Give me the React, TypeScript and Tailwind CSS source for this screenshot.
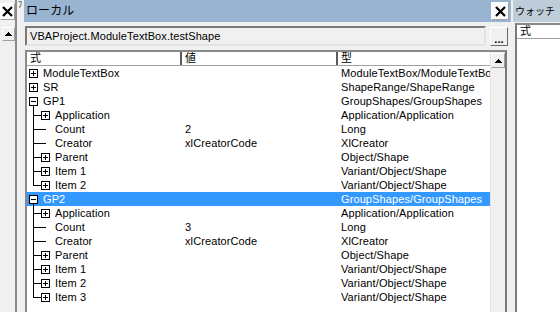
import React from "react";

type Row = {
  depth: 0 | 1;
  box?: "+" | "-";
  name: string;
  value?: string;
  type: string;
  last?: boolean;
  selected?: boolean;
};

const rows: Row[] = [
  { depth: 0, box: "+", name: "ModuleTextBox", type: "ModuleTextBox/ModuleTextBox" },
  { depth: 0, box: "+", name: "SR", type: "ShapeRange/ShapeRange" },
  { depth: 0, box: "-", name: "GP1", type: "GroupShapes/GroupShapes" },
  { depth: 1, box: "+", name: "Application", type: "Application/Application" },
  { depth: 1, name: "Count", value: "2", type: "Long" },
  { depth: 1, name: "Creator", value: "xlCreatorCode", type: "XlCreator" },
  { depth: 1, box: "+", name: "Parent", type: "Object/Shape" },
  { depth: 1, box: "+", name: "Item 1", type: "Variant/Object/Shape" },
  { depth: 1, box: "+", name: "Item 2", type: "Variant/Object/Shape", last: true },
  { depth: 0, box: "-", name: "GP2", type: "GroupShapes/GroupShapes", selected: true },
  { depth: 1, box: "+", name: "Application", type: "Application/Application" },
  { depth: 1, name: "Count", value: "3", type: "Long" },
  { depth: 1, name: "Creator", value: "xlCreatorCode", type: "XlCreator" },
  { depth: 1, box: "+", name: "Parent", type: "Object/Shape" },
  { depth: 1, box: "+", name: "Item 1", type: "Variant/Object/Shape" },
  { depth: 1, box: "+", name: "Item 2", type: "Variant/Object/Shape" },
  { depth: 1, box: "+", name: "Item 3", type: "Variant/Object/Shape", last: true },
];

function ExpandBox({ x, sign }: { x: number; sign: "+" | "-" }) {
  return (
    <g>
      <rect x={x + 0.5} y={3.5} width={8} height={8} fill="#fff" stroke="#000" />
      <line x1={x + 2} y1={7.5} x2={x + 7} y2={7.5} stroke="#000" />
      {sign === "+" && <line x1={x + 4.5} y1={5} x2={x + 4.5} y2={10} stroke="#000" />}
    </g>
  );
}

function TreeGlyph({ row }: { row: Row }) {
  if (row.depth === 0) {
    return (
      <svg width="16" height="14" shapeRendering="crispEdges" className="shrink-0">
        {row.box === "-" && <line x1={6.5} y1={11} x2={6.5} y2={14} stroke="#000" />}
        {row.box && <ExpandBox x={2} sign={row.box} />}
      </svg>
    );
  }
  return (
    <svg width="28" height="14" shapeRendering="crispEdges" className="shrink-0">
      <line x1={6.5} y1={0} x2={6.5} y2={row.last ? 8 : 14} stroke="#000" />
      <line x1={6} y1={7.5} x2={row.box ? 14 : 19} y2={7.5} stroke="#000" />
      {row.box && <ExpandBox x={14} sign={row.box} />}
    </svg>
  );
}

function CloseButton({ className }: { className: string }) {
  return (
    <div
      className={`flex items-center justify-center border border-t-white border-l-white border-r-[#a0a0a0] border-b-[#a0a0a0] bg-[#fbfbfb] ${className}`}
    >
      <svg width="11" height="11" viewBox="0 0 11 11">
        <path d="M1 1 L10 10 M10 1 L1 10" stroke="#000" strokeWidth="2.2" />
      </svg>
    </div>
  );
}

function UpArrow({ className }: { className: string }) {
  return (
    <div
      className={`flex items-center justify-center border border-t-white border-l-white border-r-[#a0a0a0] border-b-[#a0a0a0] bg-[#f0f0f0] ${className}`}
    >
      <svg width="7" height="4" viewBox="0 0 7 4" shapeRendering="crispEdges">
        <path d="M3.5 0 L7 4 L0 4 Z" fill="#000" />
      </svg>
    </div>
  );
}

export default function App() {
  return (
    <div className="flex h-[312px] w-[560px] overflow-hidden bg-[#f0f0f0] font-['Liberation_Sans','Noto_Sans_CJK_JP',sans-serif] text-[11px] tracking-[0.1px] text-black">
      {/* previous pane, mostly hidden */}
      <div className="flex w-[24px] shrink-0">
        <div className="flex w-[15px] flex-col">
          <CloseButton className="mt-[3px] h-[17px] w-[15px]" />
          <UpArrow className="ml-[2px] mt-[7px] h-[14px] w-[13px]" />
        </div>
        <div className="w-[2px] bg-[#8a8a8a]" />
        <div className="w-[7px] overflow-hidden pl-[1px] text-[8px] leading-[10px]">ﾌ</div>
      </div>

      {/* ローカル */}
      <div className="flex w-[487px] shrink-0 flex-col">
        <div className="flex h-[22px] items-center justify-between bg-[#99b4d1] pl-[2px] pr-[2px]">
          <span className="text-[12px]">ローカル</span>
          <CloseButton className="h-[18px] w-[18px]" />
        </div>

        <div className="mt-[4px] flex items-start">
          <div className="ml-[1px] flex h-[20px] w-[461px] items-center border-2 border-t-[#7a7a7a] border-l-[#7a7a7a] border-r-[#e3e3e3] border-b-[#e3e3e3] bg-[#f0f0f0] pl-[3px]">
            VBAProject.ModuleTextBox.testShape
          </div>
          <div className="ml-[4px] mt-[1px] flex h-[19px] w-[18px] items-end justify-center border border-t-white border-l-white border-r-[#696969] border-b-[#696969] bg-[#f0f0f0] pb-[2px] text-[11px] font-bold leading-[8px]">
            ...
          </div>
        </div>

        <div className="ml-[1px] mt-[4px] flex w-[482px] flex-1 border-2 border-b-0 border-t-[#8a8a8a] border-l-[#8a8a8a] border-r-[#7a7a7a] bg-white">
          <div className="flex min-w-0 flex-1 flex-col overflow-hidden">
            <div className="flex h-[14px] shrink-0 border-b border-[#a0a0a0] leading-[13px]">
              <div className="w-[155px] shrink-0 border-r-2 border-r-[#5a5a5a] pl-[3px]">式</div>
              <div className="w-[156px] shrink-0 border-r-2 border-r-[#5a5a5a] pl-[3px]">値</div>
              <div className="flex-1 pl-[3px]">型</div>
            </div>
            {rows.map((row, i) => (
              <div
                key={i}
                className={`flex h-[14px] shrink-0 items-center whitespace-nowrap leading-[14px] ${row.selected ? "bg-[#3399ff] text-white" : ""}`}
              >
                <div className="flex w-[155px] shrink-0 items-center">
                  <TreeGlyph row={row} />
                  <span>{row.name}</span>
                </div>
                <div className="w-[156px] shrink-0 pl-[3px]">{row.value}</div>
                <div className="min-w-0 flex-1 overflow-hidden pl-[3px]">{row.type}</div>
              </div>
            ))}
          </div>
          <div className="flex w-[15px] shrink-0 flex-col border-l border-[#e3e3e3] bg-[#f0f0f0]">
            <UpArrow className="mt-[1px] h-[15px] w-[14px]" />
          </div>
        </div>
      </div>

      <div className="w-[2px] shrink-0" />

      {/* ウォッチ */}
      <div className="flex min-w-0 flex-1 flex-col">
        <div className="flex h-[22px] items-center bg-[#bfcddb] pl-[2px]">
          <span className="whitespace-nowrap text-[10px] tracking-normal">ウォッチ</span>
        </div>
        <div className="ml-[2px] mt-[1px] flex flex-1 flex-col border-2 border-b-0 border-r-0 border-t-[#8a8a8a] border-l-[#7a7a7a] bg-white">
          <div className="h-[14px] border-b border-[#a0a0a0] pl-[3px] leading-[13px]">式</div>
        </div>
      </div>
    </div>
  );
}
